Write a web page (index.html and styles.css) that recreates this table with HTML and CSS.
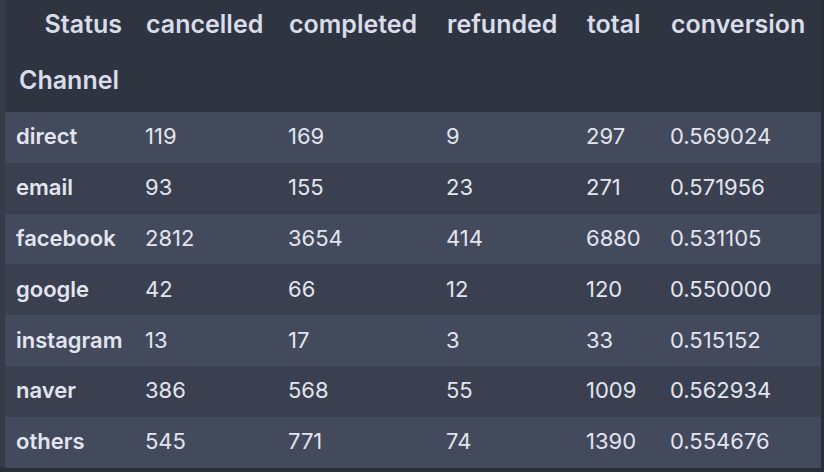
FILE: index.html
```html
<!DOCTYPE html>
<html>
<head>
<meta charset="utf-8">
<link rel="stylesheet" href="styles.css">
</head>
<body>
<div class="frame">
<table class="df">
  <colgroup>
    <col class="c-idx"><col class="c-can"><col class="c-com"><col class="c-ref"><col class="c-tot"><col class="c-conv">
  </colgroup>
  <thead>
    <tr class="h1">
      <th class="lvl">Status</th>
      <th>cancelled</th>
      <th>completed</th>
      <th>refunded</th>
      <th>total</th>
      <th>conversion</th>
    </tr>
    <tr class="h2">
      <th class="idxname">Channel</th>
      <th></th><th></th><th></th><th></th><th></th>
    </tr>
  </thead>
  <tbody>
    <tr><th>direct</th><td>119</td><td>169</td><td>9</td><td>297</td><td>0.569024</td></tr>
    <tr><th>email</th><td>93</td><td>155</td><td>23</td><td>271</td><td>0.571956</td></tr>
    <tr><th>facebook</th><td>2812</td><td>3654</td><td>414</td><td>6880</td><td>0.531105</td></tr>
    <tr><th>google</th><td>42</td><td>66</td><td>12</td><td>120</td><td>0.550000</td></tr>
    <tr><th>instagram</th><td>13</td><td>17</td><td>3</td><td>33</td><td>0.515152</td></tr>
    <tr><th>naver</th><td>386</td><td>568</td><td>55</td><td>1009</td><td>0.562934</td></tr>
    <tr><th>others</th><td>545</td><td>771</td><td>74</td><td>1390</td><td>0.554676</td></tr>
  </tbody>
</table>
</div>
</body>
</html>
```

FILE: styles.css
```css
html, body {
  margin: 0;
  padding: 0;
  background: #2a2e38;
  width: 824px;
  height: 472px;
  overflow: hidden;
}

.frame {
  width: 821px;
  height: 467px;
  background: #363b48;
  padding-left: 5px;
  box-sizing: border-box;
}

.df {
  border-collapse: collapse;
  table-layout: fixed;
  width: 816px;
  font-family: Inter, "Noto Sans CJK KR", sans-serif;
  color: #e2e5f0;
}

.c-idx { width: 129px; }
.c-can { width: 143px; }
.c-com { width: 158px; }
.c-ref { width: 140px; }
.c-tot { width: 84px; }
.c-conv { width: 162px; }

.df thead {
  background: #2f3441;
}

.df thead th {
  font-size: 25px;
  font-weight: 600;
  text-align: left;
  color: #d9dcea;
  padding: 0 0 0 12px;
  line-height: 30px;
}

.df .h1 th {
  height: 45px;
  vertical-align: middle;
  padding-top: 1px;
}

.df .h1 th.lvl {
  text-align: right;
  padding-right: 12px;
}

.df .h2 th {
  height: 66px;
  vertical-align: top;
  padding-top: 19px;
  box-sizing: border-box;
}

.df .h2 th.idxname {
  padding-left: 14px;
}

.df tbody tr {
  height: 50.8px;
}

.df tbody tr:nth-child(odd) {
  background: #434a5c;
}

.df tbody tr:nth-child(even) {
  background: #3a404f;
}

.df tbody th,
.df tbody td {
  font-size: 22px;
  line-height: 26px;
  text-align: left;
  padding: 0 0 2px 11px;
  vertical-align: middle;
  white-space: nowrap;
}

.df tbody th {
  font-weight: 600;
}

.df tbody td {
  font-weight: 400;
}
```
